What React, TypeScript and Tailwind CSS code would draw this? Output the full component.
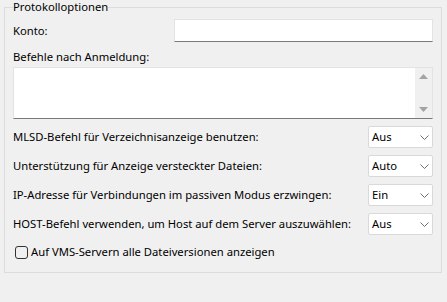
const rows = [
  { label: 'MLSD-Befehl für Verzeichnisanzeige benutzen:', value: 'Aus' },
  { label: 'Unterstützung für Anzeige versteckter Dateien:', value: 'Auto' },
  { label: 'IP-Adresse für Verbindungen im passiven Modus erzwingen:', value: 'Ein' },
  { label: 'HOST-Befehl verwenden, um Host auf dem Server auszuwählen:', value: 'Aus' },
]

function Chevron() {
  return (
    <svg width="9" height="5" viewBox="0 0 9 5" className="shrink-0">
      <path d="M0.5 0.5 L4.5 4.5 L8.5 0.5" fill="none" stroke="#6d6d6d" strokeWidth="1" />
    </svg>
  )
}

function Select({ value }: { value: string }) {
  return (
    <div className="flex h-[22px] w-[65px] shrink-0 items-center justify-between rounded-[2px] border border-[#d9d9d9] bg-white pl-[3px] pr-[3px]">
      <span>{value}</span>
      <Chevron />
    </div>
  )
}

export default function App() {
  return (
    <div className="h-[302px] w-[447px] bg-[#f0f0f0] pl-1 pr-[5px] font-['Noto_Sans',sans-serif] text-[11.25px] leading-[16px] text-black">
      <fieldset className="m-0 h-[273px] border border-[#dcdcdc] px-2">
        <legend className="px-0 leading-[14px]">Protokolloptionen</legend>

        <div className="mt-[5px] flex h-[23px] items-center">
          <span className="flex-1">Konto:</span>
          <div className="h-[23px] w-[259px] border border-[#e3e3e3] border-b-[#7a7a7a] bg-white" />
        </div>

        <p className="mt-[7px]">Befehle nach Anmeldung:</p>

        <div className="mt-[2px] flex h-[52px] border border-[#e3e3e3] border-b-[#7a7a7a] bg-white">
          <div className="flex-1" />
          <div className="flex w-[17px] flex-col items-center justify-between bg-[#f0f0f0] py-[6px]">
            <svg width="9" height="5" viewBox="0 0 9 5">
              <path d="M0 5 L4.5 0 L9 5 Z" fill="#a3a3a3" />
            </svg>
            <svg width="9" height="5" viewBox="0 0 9 5">
              <path d="M0 0 L4.5 5 L9 0 Z" fill="#a3a3a3" />
            </svg>
          </div>
        </div>

        <div className="mt-[7px] flex flex-col gap-[7px]">
          {rows.map(r => (
            <div key={r.label} className="flex h-[22px] items-center justify-between">
              <span>{r.label}</span>
              <Select value={r.value} />
            </div>
          ))}
        </div>

        <label className="mt-[9px] flex items-center gap-[3px] pl-[2px]">
          <span className="h-[13px] w-[13px] rounded-[3px] border border-[#333333]" />
          <span>Auf VMS-Servern alle Dateiversionen anzeigen</span>
        </label>
      </fieldset>
    </div>
  )
}
